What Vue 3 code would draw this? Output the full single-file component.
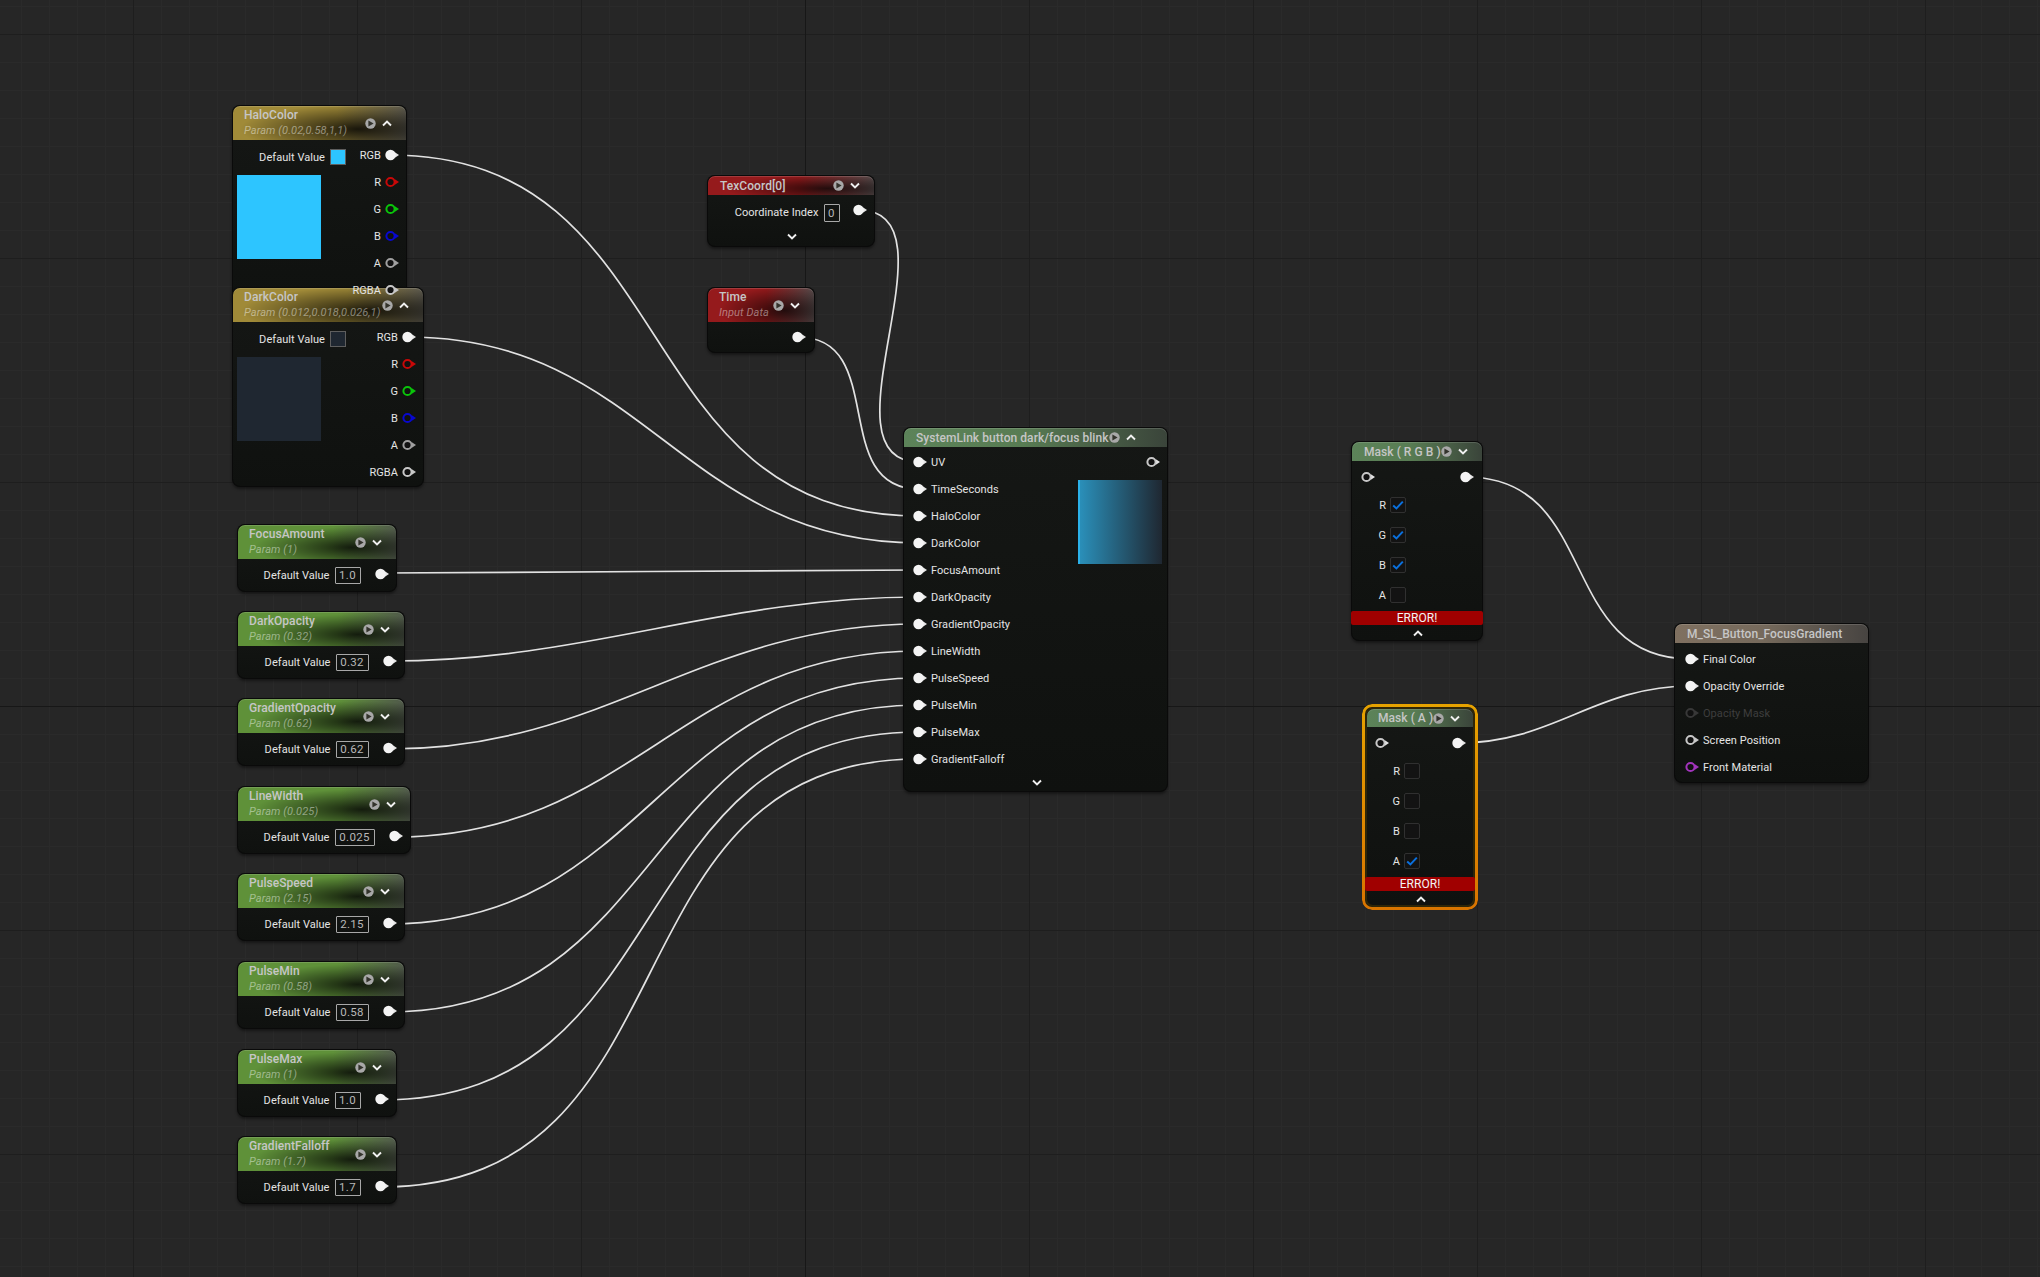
<script setup>
import { h } from 'vue'

const Pin = (p) =>
  h('svg', { class: 'pin', width: 14, height: 12, viewBox: '0 0 14 12' }, [
    h('path', { d: 'M9.5 3 L14 6 L9.5 9 Z', fill: p.color || '#e6e6e6' }),
    p.solid
      ? h('circle', { cx: 5.5, cy: 6, r: 5.2, fill: '#f4f4f4' })
      : h('circle', { cx: 5.5, cy: 6, r: 4.1, fill: '#111', stroke: p.color || '#c8c8c8', 'stroke-width': 2 })
  ])
Pin.props = { solid: Boolean, color: String }

const Play = () =>
  h('svg', { class: 'play', width: 11, height: 11, viewBox: '0 0 11 11' }, [
    h('circle', { cx: 5.5, cy: 5.5, r: 5.2, fill: '#a8a8a8' }),
    h('path', { d: 'M3.4 2.5 L8.6 5.5 L3.4 8.5 Z', fill: '#33332c' })
  ])

const Chev = (p) =>
  h('svg', { class: 'chev', width: 10, height: 7, viewBox: '0 0 10 7' }, [
    h('path', {
      d: p.up ? 'M1 5.5 L5 1.5 L9 5.5' : 'M1 1.5 L5 5.5 L9 1.5',
      fill: 'none',
      stroke: '#f0f0f0',
      'stroke-width': 1.9
    })
  ])
Chev.props = { up: Boolean }

const Check = () =>
  h('svg', { width: 12, height: 10, viewBox: '0 0 12 10' }, [
    h('path', { d: 'M1.2 5.5 L4.4 8.4 L10.8 1.6', fill: 'none', stroke: '#0a70de', 'stroke-width': 2 })
  ])

const pos = (l, t, w) => ({ left: l + 'px', top: t + 'px', width: w + 'px' })

const colors = [
  { name: 'HaloColor', sub: 'Param (0.02,0.58,1,1)', l: 232, t: 105, w: 175, h: 201, c: '#2dc5ff', colW: 114 },
  { name: 'DarkColor', sub: 'Param (0.012,0.018,0.026,1)', l: 232, t: 287, w: 192, h: 200, c: '#1f2731', colW: 114 }
]
const channels = [
  { n: 'RGB', solid: true },
  { n: 'R', color: '#c80808' },
  { n: 'G', color: '#0ac40a' },
  { n: 'B', color: '#0808d0' },
  { n: 'A', color: '#a0a0a0' },
  { n: 'RGBA', color: '#c8c8c8' }
]

const params = [
  { name: 'FocusAmount', sub: 'Param (1)', v: '1.0', t: 524, w: 160, bw: 26, y: 573 },
  { name: 'DarkOpacity', sub: 'Param (0.32)', v: '0.32', t: 611, w: 168, bw: 33, y: 661 },
  { name: 'GradientOpacity', sub: 'Param (0.62)', v: '0.62', t: 698, w: 168, bw: 33, y: 749 },
  { name: 'LineWidth', sub: 'Param (0.025)', v: '0.025', t: 786, w: 174, bw: 40, y: 837 },
  { name: 'PulseSpeed', sub: 'Param (2.15)', v: '2.15', t: 873, w: 168, bw: 33, y: 924 },
  { name: 'PulseMin', sub: 'Param (0.58)', v: '0.58', t: 961, w: 168, bw: 33, y: 1012 },
  { name: 'PulseMax', sub: 'Param (1)', v: '1.0', t: 1049, w: 160, bw: 26, y: 1100 },
  { name: 'GradientFalloff', sub: 'Param (1.7)', v: '1.7', t: 1136, w: 160, bw: 26, y: 1187 }
]

const inputs = ['UV', 'TimeSeconds', 'HaloColor', 'DarkColor', 'FocusAmount', 'DarkOpacity', 'GradientOpacity', 'LineWidth', 'PulseSpeed', 'PulseMin', 'PulseMax', 'GradientFalloff']

const masks = [
  { name: 'Mask ( R G B )', l: 1351, t: 441, w: 132, on: [true, true, true, false], sel: false },
  { name: 'Mask ( A )', l: 1365, t: 707, w: 110, on: [false, false, false, true], sel: true }
]
const rgba = ['R', 'G', 'B', 'A']

const outs = [
  { n: 'Final Color', solid: true },
  { n: 'Opacity Override', solid: true },
  { n: 'Opacity Mask', color: '#383838', dim: true },
  { n: 'Screen Position', color: '#c8c8c8' },
  { n: 'Front Material', color: '#a234bc' }
]

const wire = (x0, y0, x1, y1) => {
  const c = (Math.abs(x1 - x0) + Math.abs(y1 - y0)) / 3
  return `M${x0} ${y0} C${x0 + c} ${y0} ${x1 - c} ${y1} ${x1} ${y1}`
}
const wires = [
  [390, 155, 919, 516],
  [408, 337, 919, 543],
  [859, 210, 919, 462],
  [798, 337, 919, 489],
  ...params.map((p, i) => [237 + p.w - 16, p.y, 919, 570 + i * 27]),
  [1466, 477, 1691, 659],
  [1458, 743, 1691, 686]
].map((a) => wire(...a))
</script>

<template>
  <div class="canvas">
    <svg class="wires" width="2040" height="1277">
      <path v-for="(d, i) in wires" :key="i" :d="d" />
    </svg>

    <div v-for="n in colors" :key="n.name" class="node" :style="{ ...pos(n.l, n.t, n.w), height: n.h + 'px' }">
      <div class="head tall gold">
        <div class="titles"><div class="title">{{ n.name }}</div><div class="sub">{{ n.sub }}</div></div>
        <div class="tools"><Play /><Chev up /></div>
      </div>
      <div class="color-body">
        <div class="color-left" :style="{ width: n.colW + 'px' }">
          <div class="dv"><span>Default Value</span><i class="swatch" :style="{ background: n.c }"></i></div>
          <div class="preview" :style="{ background: n.c }"></div>
        </div>
        <div class="color-right">
          <div v-for="c in channels" :key="c.n" class="pinrow out" :class="{ over: n.name === 'HaloColor' && c.n === 'RGBA' }">
            <span>{{ c.n }}</span><Pin :solid="c.solid" :color="c.color" />
          </div>
        </div>
      </div>
    </div>

    <div v-for="p in params" :key="p.name" class="node" :style="pos(237, p.t, p.w)">
      <div class="head tall green">
        <div class="titles"><div class="title">{{ p.name }}</div><div class="sub">{{ p.sub }}</div></div>
        <div class="tools"><Play /><Chev /></div>
      </div>
      <div class="param-row padded">
        <span>Default Value</span>
        <b class="box" :style="{ width: p.bw + 'px' }">{{ p.v }}</b>
        <Pin solid />
      </div>
    </div>

    <div class="node" :style="pos(707, 175, 168)">
      <div class="head slim red">
        <div class="title">TexCoord[0]</div>
        <div class="tools"><Play /><Chev /></div>
      </div>
      <div class="param-row low">
        <span>Coordinate Index</span>
        <b class="box tex">0</b>
        <Pin solid />
      </div>
      <div class="foot"><Chev /></div>
    </div>

    <div class="node" :style="pos(707, 287, 108)">
      <div class="head tall red">
        <div class="titles"><div class="title">Time</div><div class="sub">Input Data</div></div>
        <div class="tools"><Play /><Chev /></div>
      </div>
      <div class="param-row time"><Pin solid /></div>
    </div>

    <div class="node" :style="pos(903, 427, 265)">
      <div class="head slim sage wide">
        <div class="title">SystemLink button dark/focus blink</div>
        <div class="tools"><Play /><Chev up /></div>
      </div>
      <div class="inputs">
        <div v-for="n in inputs" :key="n" class="pinrow in"><Pin solid /><span>{{ n }}</span></div>
      </div>
      <div class="foot short"><Chev /></div>
      <div class="main-out"><Pin /></div>
      <div class="main-preview"></div>
    </div>

    <div v-for="m in masks" :key="m.name" class="node" :class="{ selected: m.sel }" :style="pos(m.l, m.t, m.w)">
      <div class="head slim sage">
        <div class="title">{{ m.name }}</div>
        <div class="tools"><Play /><Chev /></div>
      </div>
      <div class="mask-pins"><Pin /><Pin solid /></div>
      <div v-for="(ch, i) in rgba" :key="ch" class="mask-row">
        <span>{{ ch }}</span>
        <i class="check"><Check v-if="m.on[i]" /></i>
      </div>
      <div class="error">ERROR!</div>
      <div class="foot tiny"><Chev up /></div>
    </div>

    <div class="node" :style="pos(1674, 623, 195)">
      <div class="head slim brown"><div class="title">M_SL_Button_FocusGradient</div></div>
      <div class="inputs mat">
        <div v-for="o in outs" :key="o.n" class="pinrow in" :class="{ dim: o.dim }">
          <Pin :solid="o.solid" :color="o.color" /><span>{{ o.n }}</span>
        </div>
      </div>
    </div>
  </div>
</template>

<style>
html, body { margin: 0; background: #262626; }
</style>

<style scoped>
.canvas {
  position: relative;
  width: 2040px;
  height: 1277px;
  overflow: hidden;
  font-family: Roboto, "Liberation Sans", sans-serif;
  font-size: 11px;
  letter-spacing: 0.05px;
  color: #e4e4e4;
  background-color: #262626;
  background-image:
    linear-gradient(90deg, #171717 1px, transparent 1px),
    linear-gradient(#171717 1px, transparent 1px),
    linear-gradient(90deg, #1e1e1e 1px, transparent 1px),
    linear-gradient(#1e1e1e 1px, transparent 1px),
    linear-gradient(90deg, #2a2a2a 1px, transparent 1px),
    linear-gradient(#2a2a2a 1px, transparent 1px);
  background-size: 2040px 100%, 100% 1277px, 224px 100%, 100% 224px, 28px 100%, 100% 28px;
  background-repeat: no-repeat, no-repeat, repeat, repeat, repeat, repeat;
  background-position: 805px 0, 0 706px, 133px 0, 0 34px, 21px 0, 0 6px;
}
.wires { position: absolute; left: 0; top: 0; }
.wires path { fill: none; stroke: #e2e2e2; stroke-width: 1.7; }

.node {
  position: absolute;
  box-sizing: border-box;
  background: linear-gradient(#151715, #0f110f);
  border-radius: 8px;
  box-shadow: inset 0 0 0 1px #0a0a0a, 0 2px 3px rgba(0, 0, 0, 0.45);
}
.selected::before {
  content: "";
  position: absolute;
  inset: -3px;
  padding: 3px;
  border-radius: 10px;
  background: linear-gradient(#e6a200, #d87400);
  -webkit-mask: linear-gradient(#000 0 0) content-box, linear-gradient(#000 0 0);
  -webkit-mask-composite: xor;
  mask-composite: exclude;
}
.selected { box-shadow: inset 0 0 0 2px #2e2608; }
.selected .head { margin: 2px 2px 0; height: 18px; padding-left: 11px; padding-right: 13px; }

.head {
  display: flex;
  align-items: center;
  box-sizing: border-box;
  margin: 1px 1px 0;
  padding: 0 14px 0 12px;
  border-radius: 7px 7px 0 0;
  box-shadow: inset 0 1px 0 rgba(255, 255, 255, 0.14);
}
.tall { height: 34px; padding-left: 11px; }
.slim { height: 19px; }
.slim .title { padding-top: 1px; }
.wide { padding-right: 31px; }
.gold {
  background:
    radial-gradient(ellipse 68% 72% at 72% 68%, rgba(0, 0, 0, 0.82), rgba(0, 0, 0, 0) 100%),
    linear-gradient(90deg, #a08a38, #a08a38 60%, #5c594e 100%);
}
.green {
  background:
    radial-gradient(ellipse 62% 60% at 72% 66%, rgba(0, 0, 0, 0.78), rgba(0, 0, 0, 0) 100%),
    linear-gradient(90deg, #5f9139, #5f9139 60%, #50594a 100%);
}
.red {
  background:
    radial-gradient(ellipse 62% 70% at 72% 66%, rgba(0, 0, 0, 0.72), rgba(0, 0, 0, 0) 100%),
    linear-gradient(90deg, #951a1c, #951a1c 55%, #564a4a 100%);
}
.sage { background: linear-gradient(90deg, #5c8359, #587c53 45%, #3a443a 100%); }
.brown { background: linear-gradient(90deg, #7f7060, #766a5c 45%, #474441 100%); }

.titles { flex: none; }
.title { font-size: 12px; font-weight: 500; color: #c6c6c6; line-height: 15px; white-space: nowrap; }
.sub { margin-top: 1px; font-size: 11px; font-style: italic; letter-spacing: 0.1px; color: rgba(255, 255, 255, 0.44); line-height: 14px; white-space: nowrap; }
.tools { margin-left: auto; display: flex; align-items: center; gap: 6px; flex: none; }
.pin, .play, .chev { display: block; flex: none; }

.color-body { display: flex; padding-top: 1.5px; }
.color-left { flex: none; }
.dv { display: flex; align-items: center; justify-content: flex-end; gap: 5px; height: 20px; margin-top: 5.5px; }
.swatch { display: block; width: 16px; height: 16px; box-sizing: border-box; border: 1px solid #5e5e5e; }
.preview { width: 84px; height: 84px; margin: 8px 0 0 5px; }
.color-right { flex: 1; padding-right: 8px; }

.pinrow { display: flex; align-items: center; height: 27px; gap: 4px; white-space: nowrap; }
.pinrow.out { justify-content: flex-end; }
.over { position: relative; z-index: 5; }
.dim span { color: #3e3e3e; }

.param-row { display: flex; align-items: center; justify-content: flex-end; height: 30px; padding-right: 8.5px; }
.padded { margin-bottom: 3px; }
.param-row > span { margin-right: 5px; }
.param-row > span, .param-row > .box { margin-top: 2px; }
.low > span, .low > .box { margin-top: 5px; }
.box {
  display: block;
  box-sizing: border-box;
  height: 17px;
  margin-right: 14px;
  border: 1px solid #a8a8a8;
  border-radius: 1px;
  font-weight: 400;
  font-size: 11.5px;
  line-height: 15px;
  letter-spacing: 0.3px;
  text-align: center;
  color: #b8b8b8;
}
.tex { width: 16px; height: 18px; line-height: 16px; margin-right: 13px; }
.time { margin-bottom: 1px; padding-right: 9px; }
.foot { display: flex; align-items: center; justify-content: center; height: 22px; padding-left: 2px; box-sizing: border-box; }
.foot.short { height: 19px; }
.foot.tiny { height: 16px; }

.inputs { padding: 1.5px 0 0 10px; }
.mat { padding: 2.5px 0 2.5px 11px; }
.main-out { position: absolute; left: 242.5px; top: 29px; }
.main-preview {
  position: absolute;
  left: 175px;
  top: 53px;
  width: 84px;
  height: 84px;
  background: linear-gradient(90deg, #2bb2ea 0, #2bb2ea 2px, #2a8fb9 2px, #1f2731 100%);
}

.mask-pins { display: flex; align-items: flex-start; justify-content: space-between; box-sizing: border-box; height: 29px; padding: 10px 9.5px 0 9.5px; }
.mask-row { display: flex; align-items: center; height: 30px; }
.mask-row > span { width: 39px; text-align: right; padding-right: 4px; box-sizing: border-box; flex: none; }
.check {
  display: flex;
  align-items: center;
  justify-content: center;
  width: 16px;
  height: 16px;
  box-sizing: border-box;
  border: 1px solid #303030;
  border-radius: 2px;
  background: #131313;
}
.error {
  position: relative;
  height: 14px;
  margin-top: 1px;
  background: #a00000;
  color: #f4f4f4;
  font-size: 12px;
  line-height: 14px;
  text-align: center;
  border-radius: 2px;
}
</style>
